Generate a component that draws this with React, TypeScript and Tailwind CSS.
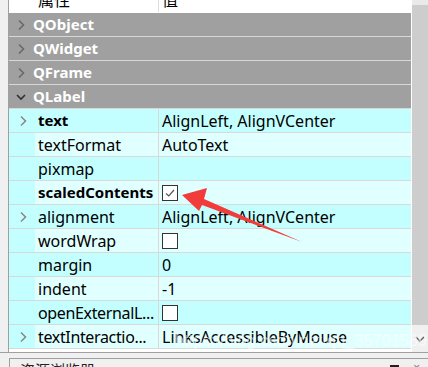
import React from "react";

const font = { fontFamily: '"Noto Sans", "Noto Sans CJK SC", sans-serif' };

function Chevron({ down = false, color }: { down?: boolean; color: string }) {
  return down ? (
    <svg width="12" height="12" viewBox="0 0 12 12">
      <path d="M2 4 L6 8 L10 4" fill="none" stroke={color} strokeWidth="1.6" />
    </svg>
  ) : (
    <svg width="12" height="12" viewBox="0 0 12 12">
      <path d="M4 1.5 L8.5 6 L4 10.5" fill="none" stroke={color} strokeWidth="1.6" />
    </svg>
  );
}

function CheckBox({ checked = false }: { checked?: boolean }) {
  return (
    <div className="w-[16px] h-[16px] border border-[#333333] bg-white flex items-center justify-center">
      {checked && (
        <svg width="12" height="12" viewBox="0 0 12 12">
          <path d="M2 6.5 L4.8 9 L10 3" fill="none" stroke="#555555" strokeWidth="1.2" />
        </svg>
      )}
    </div>
  );
}

type Prop = {
  name: string;
  bold?: boolean;
  expand?: boolean;
  elided?: boolean;
  value?: string;
  check?: boolean;
  checked?: boolean;
  dark: boolean;
};

const props: Prop[] = [
  { name: "text", bold: true, expand: true, value: "AlignLeft, AlignVCenter", dark: true },
  { name: "textFormat", value: "AutoText", dark: false },
  { name: "pixmap", value: "", dark: true },
  { name: "scaledContents", bold: true, check: true, checked: true, dark: false },
  { name: "alignment", expand: true, value: "AlignLeft, AlignVCenter", dark: true },
  { name: "wordWrap", check: true, dark: false },
  { name: "margin", value: "0", dark: true },
  { name: "indent", value: "-1", dark: false },
  { name: "openExternalL...", elided: true, check: true, dark: true },
  { name: "textInteractio...", elided: true, expand: true, value: "LinksAccessibleByMouse", dark: false },
];

const groups = [
  { name: "QObject", open: false },
  { name: "QWidget", open: false },
  { name: "QFrame", open: false },
  { name: "QLabel", open: true },
];

export default function App() {
  return (
    <div
      className="relative w-[428px] h-[367px] overflow-hidden bg-[#f0f0f0] text-[16px] text-black"
      style={font}
    >
      <div className="flex h-[352px]">
        <div className="w-[9px] shrink-0 bg-[#f0f0f0] border-r border-[#a0a0a0]" />
        <div className="w-[402px] shrink-0 bg-white flex flex-col">
          {/* header (partially scrolled out) */}
          <div className="h-[13px] overflow-hidden shrink-0">
            <div className="-mt-[12px] h-[24px] flex">
              <div className="w-[150px] border-r border-[#dcdcdc] flex items-center pl-[29px]">属性</div>
              <div className="flex-1 flex items-center pl-[3px]">值</div>
            </div>
          </div>
          {groups.map((g) => (
            <div
              key={g.name}
              className="h-[24px] shrink-0 bg-[#a0a0a0] border-b border-[#d8d8d8] flex items-center"
            >
              <div className="w-[24px] flex justify-center">
                <Chevron down={g.open} color={g.open ? "#303030" : "#686868"} />
              </div>
              <span className="font-bold text-[15px] text-white">{g.name}</span>
            </div>
          ))}
          {props.map((p) => {
            const bg = p.dark ? "bg-[#c4ffff]" : "bg-[#e0ffff]";
            return (
              <div key={p.name} className="h-[24px] shrink-0 flex border-b border-[#d9d9d9]">
                <div className="w-[150px] flex border-r border-[#d9d9d9]">
                  <div className="w-[26px] bg-[#c4ffff] flex items-center justify-center pl-[2px]">
                    {p.expand && <Chevron color="#8a8a8a" />}
                  </div>
                  <div
                    className={`flex-1 ${bg} flex items-center pl-[3px] overflow-hidden whitespace-nowrap ${
                      p.bold ? "font-bold text-[15px]" : ""
                    } ${p.elided ? "tracking-[-0.35px]" : ""}`}
                  >
                    {p.name}
                  </div>
                </div>
                <div className={`flex-1 ${bg} flex items-center pl-[3px] whitespace-nowrap`}>
                  {p.check ? <CheckBox checked={p.checked} /> : p.value}
                </div>
              </div>
            );
          })}
          <div className="flex-1 bg-white" />
        </div>
        <div className="w-[1px] shrink-0 bg-white" />
        <div className="w-[16px] shrink-0 flex flex-col bg-[#f0f0f0]">
          <div className="h-[5px] bg-[#eaeaea]" />
          <div className="h-[320px] bg-[#cdcdcd]" />
          <div className="flex-1 flex items-center justify-center">
            <svg width="10" height="8" viewBox="0 0 10 8">
              <path d="M1 2 L5 6 L9 2" fill="none" stroke="#606060" strokeWidth="1.4" />
            </svg>
          </div>
        </div>
      </div>
      <div className="h-px bg-[#a0a0a0]" />
      <div className="h-[5px]" />
      <div className="ml-[9px] flex border-t border-l border-[#a0a0a0] bg-[#f0f0f0] h-[20px]">
        <div className="pl-[10px] pt-[1px] text-[15px] leading-[20px] text-[#222]">资源浏览器</div>
        <div className="flex-1" />
        <div className="w-[9px] h-[8px] bg-[#202020] mt-[6px] mr-[14px]" />
        <div className="mt-[3px] mr-[8px] text-[#777] text-[12px] leading-[12px]">×</div>
      </div>

      {/* watermark */}
      <div
        className="absolute left-[175px] top-[329px] text-[16px] tracking-[0.2px] text-white/60 whitespace-nowrap pointer-events-none"
        style={{ fontFamily: '"Liberation Sans", Arial, sans-serif' }}
      >
        https://blog.csdn.net/qq_35701589
      </div>

      {/* red annotation arrow */}
      <svg className="absolute left-0 top-0 pointer-events-none" width="428" height="367" viewBox="0 0 428 367">
        <polygon points="182,195 207,188 204,199 302,242 202,205 199,211" fill="#f23b3b" />
      </svg>
    </div>
  );
}
